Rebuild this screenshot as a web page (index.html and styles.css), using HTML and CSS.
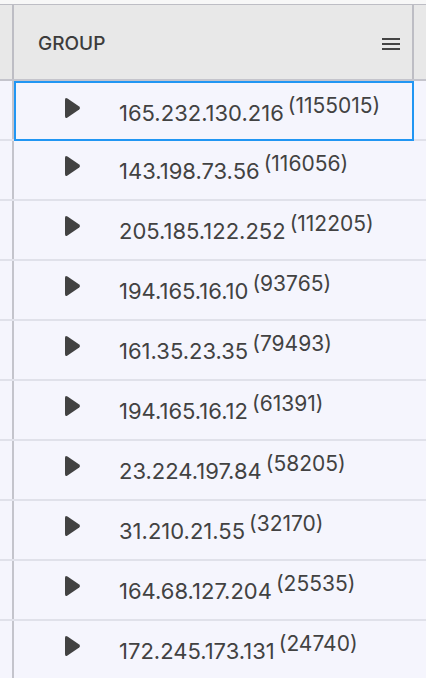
FILE: index.html
```html
<!DOCTYPE html>
<html lang="en">
<head>
    <meta charset="UTF-8">
    <meta name="viewport" content="width=device-width, initial-scale=1.0">
    <title>Group grid</title>
    <link rel="stylesheet" href="styles.css">
</head>
<body>
    <div class="grid">
        <div class="header">
            <div class="pin-cell"><span class="grip"></span></div>
            <div class="group-head">
                <span class="head-label">GROUP</span>
                <span class="menu-icon">
                    <svg width="18" height="12" viewBox="0 0 18 12"><path d="M0 1h18M0 6h18M0 11h18" stroke="#444" stroke-width="2"/></svg>
                </span>
            </div>
            <div class="filler"></div>
        </div>
        <div id="rows"></div>
    </div>

    <script>
        const groups = [
            ['165.232.130.216', 1155015],
            ['143.198.73.56', 116056],
            ['205.185.122.252', 112205],
            ['194.165.16.10', 93765],
            ['161.35.23.35', 79493],
            ['194.165.16.12', 61391],
            ['23.224.197.84', 58205],
            ['31.210.21.55', 32170],
            ['164.68.127.204', 25535],
            ['172.245.173.131', 24740]
        ];

        const rows = document.getElementById('rows');
        groups.forEach(function(g, i) {
            const row = document.createElement('div');
            row.className = 'row';
            row.innerHTML =
                '<div class="pin-cell"></div>' +
                '<div class="group-cell' + (i === 0 ? ' focused' : '') + '">' +
                    '<svg class="caret" width="17" height="22" viewBox="0 0 17 22"><path d="M3.5 1.6 L15.2 9.4 Q17 11 15.2 12.6 L3.5 20.4 Q1 22 1 19 V3 Q1 0 3.5 1.6 Z" fill="#424242"/></svg>' +
                    '<span class="ip">' + g[0] + '</span>' +
                    '<span class="count">(' + g[1] + ')</span>' +
                '</div>' +
                '<div class="filler"></div>';
            rows.appendChild(row);
        });
    </script>
</body>
</html>
```

FILE: styles.css
```css
body {
    margin: 0;
    background: #f5f5fd;
    font-family: Inter, "Noto Sans", sans-serif;
    color: #424242;
}
.grid {
    padding-top: 4px;
    background: #f7f7f7;
}
.header {
    display: flex;
    height: 74px;
    background: #e8e8e8;
    border-top: 1px solid #bdbdc4;
    border-bottom: 2px solid #c4c4cc;
}
.pin-cell {
    width: 12px;
    flex-shrink: 0;
    border-right: 2px solid #bdbdc4;
}
.group-head {
    width: 374px;
    flex-shrink: 0;
    display: flex;
    align-items: center;
    justify-content: space-between;
    padding: 3px 12px 0;
    border-right: 2px solid #bdbdc4;
}
.head-label {
    padding-left: 12px;
    font-size: 19px;
    font-weight: 500;
    color: #3c3c3c;
}
.menu-icon {
    display: flex;
    padding-top: 1px;
}
.filler {
    flex: 1;
}
#rows {
    background: #f5f5fd;
}
.row {
    display: flex;
    height: 58px;
    border-bottom: 2px solid #e0e1ea;
}
.row .pin-cell {
    border-right-color: #c4c4cc;
}
.group-cell {
    width: 400px;
    flex-shrink: 0;
    display: flex;
    align-items: center;
    box-sizing: border-box;
    padding-left: 48px;
    border: 2px solid transparent;
    margin-top: -2px;
    height: 60px;
}
.row:first-child .group-cell {
    margin-top: 0;
}
.group-cell.focused {
    border-color: #2196f3;
}
.caret {
    margin-right: 38px;
    margin-bottom: 6px;
}
.ip {
    font-size: 22px;
    margin-top: 4px;
}
.count {
    font-size: 21px;
    margin-left: 4px;
    margin-bottom: 12px;
}
```
